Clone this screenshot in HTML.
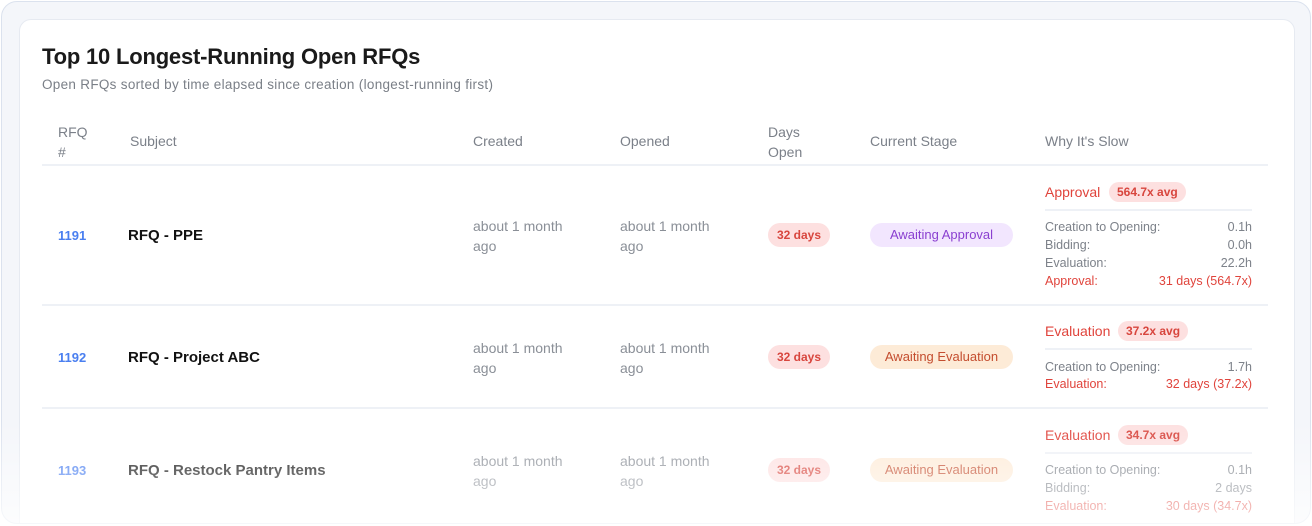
<!DOCTYPE html>
<html><head><meta charset="utf-8"><style>
*{margin:0;padding:0;box-sizing:border-box}
html,body{width:1312px;height:526px;overflow:hidden}
body{background:#fff;font-family:"Liberation Sans",sans-serif;position:relative}
.outer{position:absolute;left:1px;top:1px;width:1310px;height:523px;border:1px solid #dbe2ee;border-radius:16px;background:#f4f6fa;overflow:hidden}
.card{position:absolute;left:17px;top:17px;width:1276px;height:530px;border:1px solid #e6eaf1;border-radius:12px;background:#fff}
.a{position:absolute;white-space:nowrap}
h1{position:absolute;left:42px;top:44px;font-size:22px;font-weight:600;color:#1a1a1a;letter-spacing:-0.2px}
.sub{left:42px;top:77px;font-size:13.5px;color:#7a7f87;letter-spacing:0.3px}
.th{font-size:14px;color:#7b8089}
.line{position:absolute;left:42px;width:1226px;height:2px;background:#eef1f6}
.id{font-size:13px;font-weight:700;color:#4a7ff0}
.subj{font-size:15px;font-weight:700;color:#111}
.dt{font-size:14px;color:#8a8f97;line-height:20px}
.pill{position:absolute;height:24px;border-radius:12px;font-size:12px;font-weight:700;line-height:24px;text-align:center}
.days{left:768px;width:62px;background:#fde0e0;color:#d8463e}
.st{left:870px;width:143px;font-size:13px;font-weight:400}
.ap{background:#f2e6fe;color:#8a3fd0}
.ev{background:#fdebd7;color:#c44d2f}
.wh{left:1045px;font-size:14px;color:#e0443c}
.avg{position:absolute;height:20px;border-radius:10px;background:#fde0e0;color:#d8463e;font-size:12px;font-weight:700;line-height:20px;padding:0 8px}
.sl{position:absolute;left:1045px;width:207px;height:2px;background:#eef1f6}
.r{position:absolute;left:1045px;width:207px;font-size:12.5px;color:#7d828a;display:flex;justify-content:space-between}
.r.red{color:#e0443c}
.fade{position:absolute;left:0;top:420px;width:1312px;height:106px;background:linear-gradient(rgba(255,255,255,0),rgba(255,255,255,0.75))}
</style></head><body>
<div class="outer"><div class="card"></div></div>
<h1>Top 10 Longest-Running Open RFQs</h1>
<div class="a sub">Open RFQs sorted by time elapsed since creation (longest-running first)</div>
<div class="a th" style="left:58px;top:122px;line-height:20px">RFQ<br>#</div>
<div class="a th" style="left:130px;top:133px">Subject</div>
<div class="a th" style="left:473px;top:133px">Created</div>
<div class="a th" style="left:620px;top:133px">Opened</div>
<div class="a th" style="left:768px;top:122px;line-height:20px">Days<br>Open</div>
<div class="a th" style="left:870px;top:133px">Current Stage</div>
<div class="a th" style="left:1045px;top:133px">Why It's Slow</div>
<div class="line" style="top:164px"></div>

<div class="a id" style="left:58px;top:228px">1191</div>
<div class="a subj" style="left:128px;top:227px">RFQ - PPE</div>
<div class="a dt" style="left:473px;top:216px">about 1 month<br>ago</div>
<div class="a dt" style="left:620px;top:216px">about 1 month<br>ago</div>
<div class="pill days" style="top:223px">32 days</div>
<div class="pill st ap" style="top:223px">Awaiting Approval</div>
<div class="a wh" style="top:184px">Approval</div>
<div class="avg" style="left:1109px;top:182px">564.7x avg</div>
<div class="sl" style="top:209px"></div>
<div class="r" style="top:220px"><span>Creation to Opening:</span><span>0.1h</span></div>
<div class="r" style="top:238px"><span>Bidding:</span><span>0.0h</span></div>
<div class="r" style="top:256px"><span>Evaluation:</span><span>22.2h</span></div>
<div class="r red" style="top:274px"><span>Approval:</span><span>31 days (564.7x)</span></div>
<div class="line" style="top:304px"></div>

<div class="a id" style="left:58px;top:350px">1192</div>
<div class="a subj" style="left:128px;top:349px">RFQ - Project ABC</div>
<div class="a dt" style="left:473px;top:338px">about 1 month<br>ago</div>
<div class="a dt" style="left:620px;top:338px">about 1 month<br>ago</div>
<div class="pill days" style="top:345px">32 days</div>
<div class="pill st ev" style="top:345px">Awaiting Evaluation</div>
<div class="a wh" style="top:323px">Evaluation</div>
<div class="avg" style="left:1118px;top:321px">37.2x avg</div>
<div class="sl" style="top:348px"></div>
<div class="r" style="top:360px"><span>Creation to Opening:</span><span>1.7h</span></div>
<div class="r red" style="top:377px"><span>Evaluation:</span><span>32 days (37.2x)</span></div>
<div class="line" style="top:407px"></div>

<div class="a id" style="left:58px;top:463px">1193</div>
<div class="a subj" style="left:128px;top:462px">RFQ - Restock Pantry Items</div>
<div class="a dt" style="left:473px;top:451px">about 1 month<br>ago</div>
<div class="a dt" style="left:620px;top:451px">about 1 month<br>ago</div>
<div class="pill days" style="top:458px">32 days</div>
<div class="pill st ev" style="top:458px">Awaiting Evaluation</div>
<div class="a wh" style="top:427px">Evaluation</div>
<div class="avg" style="left:1118px;top:425px">34.7x avg</div>
<div class="sl" style="top:452px"></div>
<div class="r" style="top:463px"><span>Creation to Opening:</span><span>0.1h</span></div>
<div class="r" style="top:481px"><span>Bidding:</span><span>2 days</span></div>
<div class="r red" style="top:499px"><span>Evaluation:</span><span>30 days (34.7x)</span></div>
<div class="fade"></div>
</body></html>
